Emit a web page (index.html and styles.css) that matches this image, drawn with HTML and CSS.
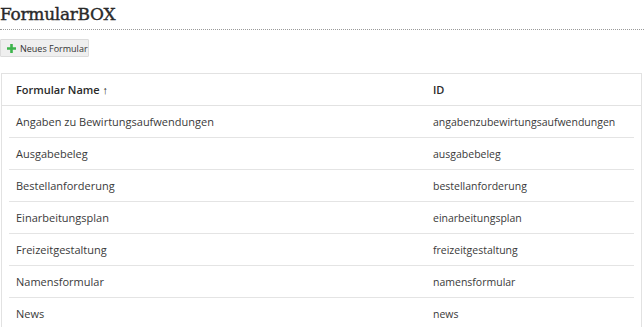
FILE: index.html
```html
<!DOCTYPE html>
<html lang="de">
<head>
<meta charset="utf-8">
<title>FormularBOX</title>
<link rel="stylesheet" href="styles.css">
</head>
<body>
<div class="page">
  <h1 class="title">FormularBOX</h1>
  <div class="toolbar">
    <button class="btn" type="button">
      <svg class="plus" width="9" height="9" viewBox="0 0 9 9"><path d="M3.2 0h2.6v3.2H9v2.6H5.8V9H3.2V5.8H0V3.2h3.2z" fill="#3cb44b"/></svg>
      <span>Neues Formular</span>
    </button>
  </div>
  <div class="card">
    <div class="row head">
      <div class="cell">Formular Name <span class="arrow">&#8593;</span></div>
      <div class="cell">ID</div>
    </div>
    <div class="body">
      <div class="row"><div class="cell">Angaben zu Bewirtungsaufwendungen</div><div class="cell id">angabenzubewirtungsaufwendungen</div></div>
      <div class="row"><div class="cell">Ausgabebeleg</div><div class="cell id">ausgabebeleg</div></div>
      <div class="row"><div class="cell">Bestellanforderung</div><div class="cell id">bestellanforderung</div></div>
      <div class="row"><div class="cell">Einarbeitungsplan</div><div class="cell id">einarbeitungsplan</div></div>
      <div class="row"><div class="cell">Freizeitgestaltung</div><div class="cell id">freizeitgestaltung</div></div>
      <div class="row"><div class="cell">Namensformular</div><div class="cell id">namensformular</div></div>
      <div class="row"><div class="cell">News</div><div class="cell id">news</div></div>
    </div>
  </div>
</div>
</body>
</html>
```
FILE: styles.css
```css
html, body {
  margin: 0;
  padding: 0;
  background: #fff;
}
body {
  font-family: "Open Sans", "Noto Sans", sans-serif;
  color: #333;
  overflow: hidden;
}
.page {
  width: 644px;
}
.title {
  margin: 0;
  padding: 3px 0 4px 0;
  height: 22px;
  font-family: "DejaVu Serif", serif;
  font-weight: normal;
  font-size: 17px;
  line-height: 22px;
  letter-spacing: -0.3px;
  color: #2a2a2a;
  -webkit-text-stroke: 0.4px #2a2a2a;
  border-bottom: 1px dotted #9a9a9a;
}
.toolbar {
  padding-top: 9px;
  height: 18px;
}
.btn {
  display: flex;
  align-items: center;
  gap: 4px;
  margin: 0;
  height: 18px;
  width: 89px;
  padding: 0 0 0 6px;
  box-sizing: border-box;
  border: 1px solid #dcdcdc;
  border-radius: 1px;
  background: #efefef;
  font-family: "Open Sans", sans-serif;
  font-size: 9px;
  white-space: nowrap;
  color: #333;
}
.plus {
  flex: none;
}
.card {
  margin: 16px 2px 0 1px;
  border: 1px solid #e2e2e2;
  border-bottom: none;
}
.row {
  display: grid;
  grid-template-columns: 417px 1fr;
  height: 32px;
  align-items: center;
  font-size: 11px;
  white-space: nowrap;
}
.head {
  padding-left: 14px;
  height: 31px;
  border-bottom: 1px solid #e2e2e2;
  font-weight: 600;
  color: #2a2a2a;
}
.arrow {
  font-weight: 400;
}
.body {
  padding: 0 7px;
}
.body .row {
  padding-left: 7px;
  height: 31px;
  border-bottom: 1px solid #e4e4e4;
}
.body .row .cell {
  color: #3a3a3a;
}
.body .row .id {
  font-size: 10.5px;
}
```
